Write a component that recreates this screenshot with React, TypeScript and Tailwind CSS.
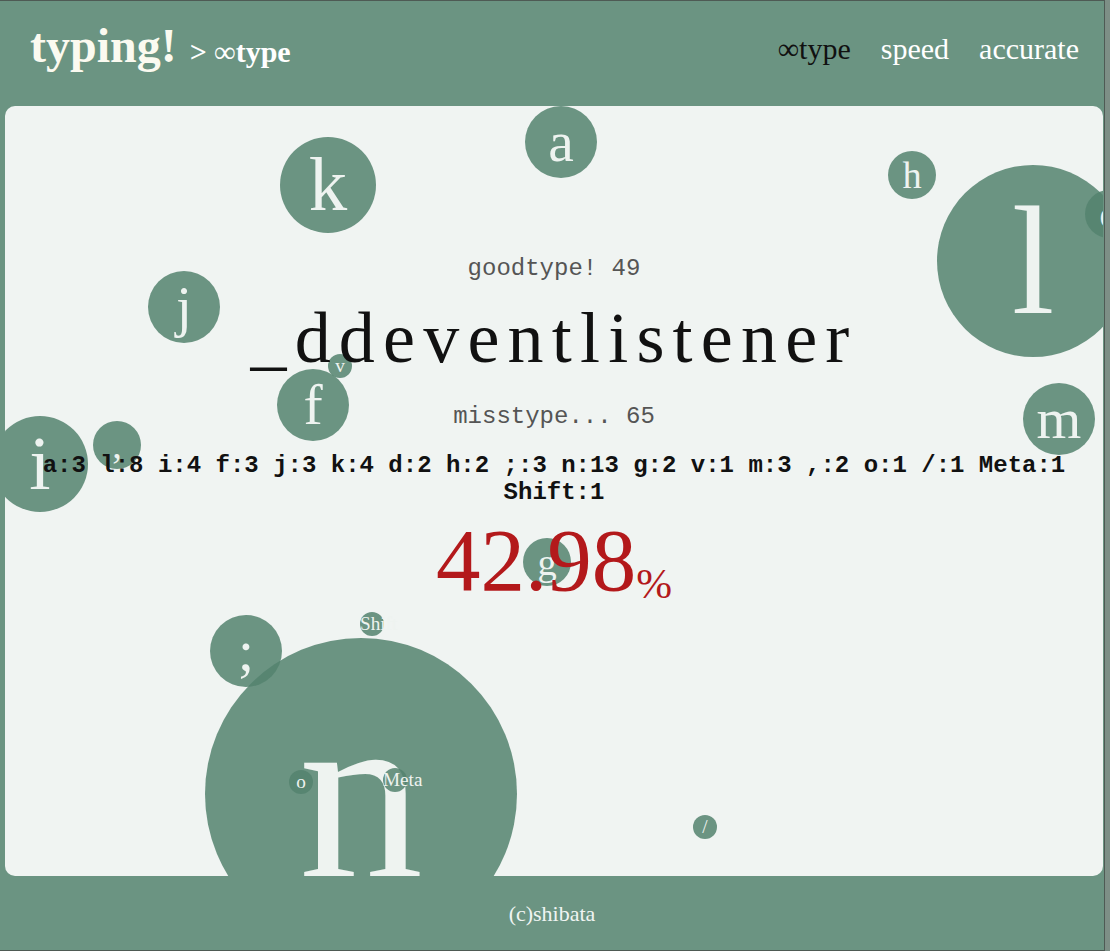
import React from 'react';

// 入力したキーの数だけ大きくなる泡。cx, cy はページ座標の中心
type Bubble = { key: string; count: number; cx: number; cy: number };

const bubbles: Bubble[] = [
  { key: 'a', count: 3, cx: 561, cy: 142 },
  { key: 'k', count: 4, cx: 328, cy: 185 },
  { key: 'h', count: 2, cx: 912, cy: 175 },
  { key: 'l', count: 8, cx: 1033, cy: 261 },
  { key: 'd', count: 2, cx: 1109, cy: 214 },
  { key: 'j', count: 3, cx: 184, cy: 307 },
  { key: 'f', count: 3, cx: 313, cy: 405 },
  { key: 'v', count: 1, cx: 340, cy: 366 },
  { key: 'i', count: 4, cx: 40, cy: 464 },
  { key: ',', count: 2, cx: 117, cy: 445 },
  { key: 'm', count: 3, cx: 1059, cy: 419 },
  { key: 'g', count: 2, cx: 547, cy: 562 },
  { key: 'n', count: 13, cx: 361, cy: 794 },
  { key: ';', count: 3, cx: 246, cy: 651 },
  { key: 'Shift', count: 1, cx: 372, cy: 624 },
  { key: 'o', count: 1, cx: 301, cy: 782 },
  { key: 'Meta', count: 1, cx: 395, cy: 780 },
  { key: '/', count: 1, cx: 705, cy: 827 },
];

const stats: [string, number][] = [
  ['a', 3], ['l', 8], ['i', 4], ['f', 3], ['j', 3], ['k', 4], ['d', 2], ['h', 2], [';', 3],
  ['n', 13], ['g', 2], ['v', 1], ['m', 3], [',', 2], ['o', 1], ['/', 1], ['Meta', 1], ['Shift', 1],
];

// カード左上のページ座標
const CARD_X = 5;
const CARD_Y = 106;

function KeyBubble({ b }: { b: Bubble }) {
  const d = b.count * 24;
  return (
    <div
      className="absolute rounded-full bg-[#54836e]/85 text-center whitespace-nowrap text-[#eef3f0] font-['Liberation_Serif',serif]"
      style={{
        width: d,
        height: d,
        left: b.cx - d / 2 - CARD_X,
        top: b.cy - d / 2 - CARD_Y,
        lineHeight: `${d}px`,
        fontSize: d * 0.8,
      }}
    >
      {b.key}
    </div>
  );
}

export default function App() {
  return (
    <div className="flex w-[1110px] h-[951px] bg-[#7d8f86] font-['Liberation_Serif',serif]">
      <div className="flex flex-col w-[1104px] h-full bg-[#6b9482] border-t border-b border-[#4e5a54]">
        {/* ヘッダー */}
        <header className="flex justify-between h-[105px] pl-[30px] pr-[25px]">
          <div className="flex items-baseline mt-[21px] h-fit">
            <h1 className="text-[48px] leading-none font-bold text-[#fbfaf0]">typing!</h1>
            <span className="ml-[13px] text-[30px] leading-none font-bold text-white">&gt; ∞type</span>
          </div>
          <nav className="flex gap-[30px] mt-[33px] h-fit text-[30px] leading-none">
            <a className="text-[#111]">∞type</a>
            <a className="text-white">speed</a>
            <a className="text-white">accurate</a>
          </nav>
        </header>

        {/* メインのカード */}
        <main className="relative ml-[5px] w-[1098px] h-[770px] rounded-[10px] bg-[#f0f4f2] overflow-hidden">
          {bubbles.map((b) => (
            <KeyBubble key={b.key} b={b} />
          ))}

          <div className="relative flex flex-col items-center pt-[149px] text-center">
            <p className="text-[24px] leading-[28px] text-[#555] font-['Liberation_Mono',monospace]">
              goodtype! 49
            </p>
            <p className="mt-[19px] text-[72px] leading-[72px] tracking-[8.2px] text-[#111]">
              _ddeventlistener
            </p>
            <p className="mt-[29px] text-[24px] leading-[28px] text-[#555] font-['Liberation_Mono',monospace]">
              misstype... 65
            </p>
            <p className="mt-[21px] text-[24px] leading-[27px] font-bold text-[#111] font-['Liberation_Mono',monospace]">
              {stats.map(([k, n]) => `${k}:${n}`).join(' ')}
            </p>
            <p className="mt-[10px] text-[89px] leading-none text-[#b3191b]">
              42.98<span className="relative top-[8px] text-[43px]">%</span>
            </p>
          </div>
        </main>

        {/* フッター */}
        <footer className="flex flex-1 items-center justify-center text-[22px] text-[#f0f4f2]">
          (c)shibata
        </footer>
      </div>
      <div className="w-px h-full bg-[#4e5a54]" />
    </div>
  );
}
